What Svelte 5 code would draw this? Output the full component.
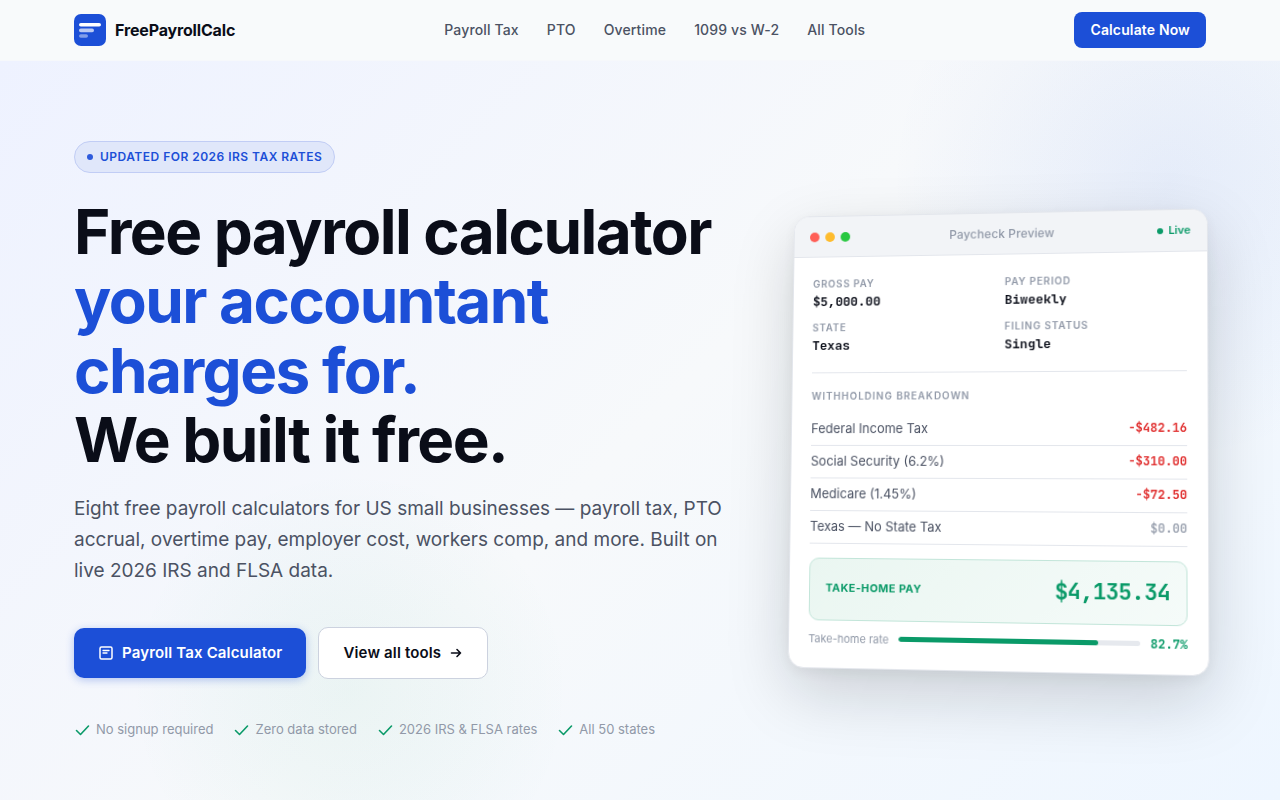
<script>
  const links = ['Payroll Tax', 'PTO', 'Overtime', '1099 vs W-2', 'All Tools'];
  const perks = ['No signup required', 'Zero data stored', '2026 IRS & FLSA rates', 'All 50 states'];
  const details = [
    ['Gross Pay', '$5,000.00'],
    ['Pay Period', 'Biweekly'],
    ['State', 'Texas'],
    ['Filing Status', 'Single']
  ];
  const withholding = [
    { name: 'Federal Income Tax', amount: '-$482.16' },
    { name: 'Social Security (6.2%)', amount: '-$310.00' },
    { name: 'Medicare (1.45%)', amount: '-$72.50' },
    { name: 'Texas — No State Tax', amount: '$0.00', none: true }
  ];
  const rate = 82.7;
</script>

<header class="nav">
  <div class="container nav-inner">
    <a class="logo" href="#home">
      <svg width="32" height="32" viewBox="0 0 32 32" aria-hidden="true">
        <rect width="32" height="32" rx="7" fill="#1c4fd7" />
        <rect x="5" y="9" width="22" height="3.6" rx="1.8" fill="#fff" />
        <rect x="5" y="14.6" width="15" height="3.6" rx="1.8" fill="#fff" opacity=".7" />
        <rect x="5" y="20.2" width="9" height="3.6" rx="1.8" fill="#fff" opacity=".45" />
      </svg>
      <span>FreePayrollCalc</span>
    </a>
    <nav class="links">
      {#each links as link}
        <a href="#tools">{link}</a>
      {/each}
    </nav>
    <a class="cta" href="#calculator">Calculate Now</a>
  </div>
</header>

<main class="hero">
  <div class="container hero-grid">
    <section class="copy">
      <p class="badge"><span class="dot"></span>Updated for 2026 IRS Tax Rates</p>
      <h1>Free payroll calculator<br /><em>your accountant<br />charges for.</em><br />We built it free.</h1>
      <p class="lead">
        Eight free payroll calculators for US small businesses — payroll tax, PTO accrual, overtime pay,
        employer cost, workers comp, and more. Built on live 2026 IRS and FLSA data.
      </p>
      <div class="actions">
        <a class="btn primary" href="#calculator">
          <svg width="16" height="16" viewBox="0 0 16 16" fill="none" stroke="currentColor" stroke-width="1.5" stroke-linecap="round" stroke-linejoin="round" aria-hidden="true">
            <rect x="2" y="2" width="12" height="12" rx="1.5" />
            <path d="M5 5.500h6M5 8h4" stroke-width="1.3" />
          </svg>
          Payroll Tax Calculator
        </a>
        <a class="btn secondary" href="#tools">
          View all tools
          <svg width="14" height="14" viewBox="0 0 14 14" fill="none" stroke="currentColor" stroke-width="1.6" stroke-linecap="round" stroke-linejoin="round" aria-hidden="true">
            <path d="M2.500 7h9M8 3.500L11.500 7 8 10.500" />
          </svg>
        </a>
      </div>
      <ul class="perks">
        {#each perks as perk}
          <li>
            <svg width="16" height="16" viewBox="0 0 16 16" fill="none" stroke="#0a9a68" stroke-width="1.6" stroke-linecap="round" stroke-linejoin="round" aria-hidden="true">
              <path d="M2.500 9.500l4 4 8-8.500" />
            </svg>
            {perk}
          </li>
        {/each}
      </ul>
    </section>

    <div class="stage">
      <article class="card">
        <header class="card-bar">
          <span class="lights"><i class="red"></i><i class="amber"></i><i class="green"></i></span>
          <span class="card-title">Paycheck Preview</span>
          <span class="live"><i></i>Live</span>
        </header>
        <div class="card-body">
          <dl class="details">
            {#each details as [label, value]}
              <div>
                <dt>{label}</dt>
                <dd>{value}</dd>
              </div>
            {/each}
          </dl>
          <table>
            <caption>Withholding Breakdown</caption>
            <tbody>
              {#each withholding as row}
                <tr>
                  <th scope="row">{row.name}</th>
                  <td class:none={row.none}>{row.amount}</td>
                </tr>
              {/each}
            </tbody>
          </table>
          <div class="take-home">
            <span class="take-label">Take-Home Pay</span>
            <span class="take-value">$4,135.34</span>
          </div>
          <div class="rate">
            <span>Take-home rate</span>
            <div class="track"><div class="fill" style="width: {rate}%"></div></div>
            <strong>{rate}%</strong>
          </div>
        </div>
      </article>
    </div>
  </div>
</main>

<style>
  :global(body) {
    margin: 0;
    background: #f8f9fb;
    color: #0a0d18;
    font-family: Inter, sans-serif;
    font-size: 16px;
    line-height: 1.6;
  }
  :global(*) {
    box-sizing: border-box;
  }
  a {
    color: inherit;
    text-decoration: none;
  }
  .container {
    width: 100%;
    max-width: 1180px;
    margin: 0 auto;
    padding: 0 24px;
  }
  .nav {
    background: #f8fafb;
    border-bottom: 1px solid #f6f8fb;
  }
  .nav-inner {
    display: flex;
    align-items: center;
    justify-content: space-between;
    height: 60px;
  }
  .logo {
    display: flex;
    align-items: center;
    gap: 9px;
    font-size: 16px;
    font-weight: 700;
    line-height: 24px;
    letter-spacing: -0.01em;
  }
  .links {
    display: flex;
    gap: 28px;
    font-size: 14px;
    font-weight: 500;
    letter-spacing: 0.01em;
    color: #4b5263;
  }
  .cta {
    padding: 0 16px;
    border-radius: 8px;
    background: #1c4fd7;
    color: #fff;
    font-size: 14px;
    font-weight: 600;
    line-height: 36px;
    letter-spacing: 0.01em;
  }
  .hero {
    min-height: calc(100vh - 61px);
    padding: 80px 0 55px;
    overflow: hidden;
    background:
      radial-gradient(circle 280px at 1170px 120px, rgba(28, 79, 215, 0.07), rgba(28, 79, 215, 0.04) 45%, transparent),
      radial-gradient(circle 220px at 350px 630px, rgba(10, 154, 104, 0.05), rgba(10, 154, 104, 0.03) 45%, transparent),
      linear-gradient(135deg, #eef2ff 0%, #f7f9fb 50%, #eef6ff 100%);
  }
  .hero-grid {
    display: grid;
    grid-template-columns: minmax(0, 1fr) 420px;
    gap: 64px;
    align-items: center;
  }
  .badge {
    display: inline-flex;
    align-items: center;
    gap: 7px;
    margin: 0 0 24px;
    padding: 6px 12px;
    border: 1px solid #c1cdf5;
    border-radius: 16px;
    background: #e0e7fa;
    color: #1c4fd7;
    font-size: 12px;
    font-weight: 600;
    line-height: 18px;
    letter-spacing: 0.04em;
    text-transform: uppercase;
  }
  .dot {
    width: 6px;
    height: 6px;
    border-radius: 50%;
    background: #2e5bdc;
  }
  .copy {
    display: flex;
    flex-direction: column;
    align-items: flex-start;
  }
  h1 {
    margin: 0 0 18px;
    font-size: 62px;
    font-weight: 700;
    line-height: 1.12;
    letter-spacing: -0.025em;
  }
  em {
    font-style: normal;
    color: #1c4fd7;
  }
  .lead {
    margin: 0 0 41px;
    font-size: 19px;
    line-height: 31px;
    color: #4b5263;
  }
  .actions {
    display: flex;
    align-items: center;
    gap: 12px;
    margin-bottom: 40px;
  }
  .btn {
    display: flex;
    align-items: center;
    gap: 8px;
    padding: 0 24px;
    border-radius: 10px;
    font-size: 15px;
    font-weight: 600;
    line-height: 50px;
    letter-spacing: 0.01em;
  }
  .primary {
    background: #1c4fd7;
    color: #fff;
    box-shadow: 0 2px 8px rgba(28, 79, 215, 0.3);
  }
  .secondary {
    border: 1px solid #ccd2df;
    background: #fff;
  }
  .perks {
    display: flex;
    gap: 20px;
    margin: 0;
    padding: 0;
    list-style: none;
    color: #9199a8;
    font-size: 13px;
    line-height: 20px;
  }
  .perks li {
    display: flex;
    align-items: center;
    gap: 6px;
  }
  .stage {
    perspective: 1200px;
  }
  .card {
    overflow: hidden;
    border: 1px solid #e3e6ec;
    border-radius: 16px;
    background: #fff;
    box-shadow:
      0 24px 64px rgba(13, 15, 26, 0.17),
      0 4px 16px rgba(13, 15, 26, 0.06);
    transform: rotateY(-6deg) rotateX(3deg);
  }
  .card-bar {
    display: flex;
    align-items: center;
    justify-content: space-between;
    height: 42px;
    padding: 0 16px;
    border-bottom: 1px solid #e3e6ec;
    background: #f2f4f7;
    font-size: 12px;
  }
  .lights {
    display: flex;
    gap: 6px;
  }
  .lights i {
    width: 10px;
    height: 10px;
    border-radius: 50%;
  }
  .red { background: #ff5f57; }
  .amber { background: #febc2e; }
  .green { background: #28c840; }
  .card-title {
    color: #9199a8;
    font-weight: 500;
    letter-spacing: 0.01em;
  }
  .live {
    display: flex;
    align-items: center;
    gap: 5px;
    color: #0a9a68;
    font-size: 11px;
    font-weight: 600;
  }
  .live i {
    width: 6px;
    height: 6px;
    border-radius: 50%;
    background: #0a9a68;
  }
  .card-body {
    padding: 20px;
  }
  dd,
  td,
  .take-value,
  strong {
    font-family: "JetBrains Mono", "Liberation Mono", monospace;
  }
  .details {
    display: grid;
    grid-template-columns: 1fr 1fr;
    gap: 10px 16px;
    margin: 0 0 16px;
    padding-bottom: 18px;
    border-bottom: 1px solid #e3e6ec;
  }
  dt,
  caption {
    color: #9199a8;
    font-size: 10px;
    font-weight: 600;
    line-height: 14px;
    letter-spacing: 0.08em;
    text-align: left;
    text-transform: uppercase;
  }
  dd {
    margin: 3px 0 0;
    font-size: 13px;
    font-weight: 600;
    line-height: 18px;
  }
  table {
    width: 100%;
    border-collapse: collapse;
  }
  caption {
    padding-bottom: 10px;
    letter-spacing: 0.1em;
  }
  th,
  td {
    height: 33px;
    padding: 0;
    border-bottom: 1px solid #e3e6ec;
  }
  th {
    color: #4b5263;
    font-size: 13px;
    font-weight: 400;
    text-align: left;
  }
  td {
    color: #e02d2d;
    font-size: 12px;
    font-weight: 600;
    text-align: right;
  }
  .none {
    color: #9199a8;
    font-weight: 500;
  }
  .take-home {
    display: flex;
    align-items: center;
    justify-content: space-between;
    height: 63px;
    margin: 14px 0 9px;
    padding: 0 16px;
    border: 1px solid #c2e5d9;
    border-radius: 10px;
    background: linear-gradient(135deg, #eaf6f1, #f5fbf9);
    color: #0a9a68;
  }
  .take-label {
    font-size: 11px;
    font-weight: 700;
    letter-spacing: 0.04em;
    text-transform: uppercase;
  }
  .take-value {
    font-size: 22px;
    font-weight: 600;
    letter-spacing: -0.03em;
  }
  .rate {
    display: flex;
    align-items: center;
    gap: 10px;
    color: #9199a8;
    font-size: 11px;
    line-height: 18px;
  }
  .track {
    flex: 1;
    height: 5px;
    border-radius: 3px;
    background: #e6e9ee;
    overflow: hidden;
  }
  .fill {
    height: 100%;
    border-radius: 3px;
    background: #0a9a68;
  }
  .rate strong {
    color: #0a9a68;
    font-size: 12px;
    font-weight: 600;
  }
  @media (max-width: 960px) {
    .hero-grid {
      grid-template-columns: minmax(0, 1fr);
    }
    .links {
      display: none;
    }
  }
</style>
